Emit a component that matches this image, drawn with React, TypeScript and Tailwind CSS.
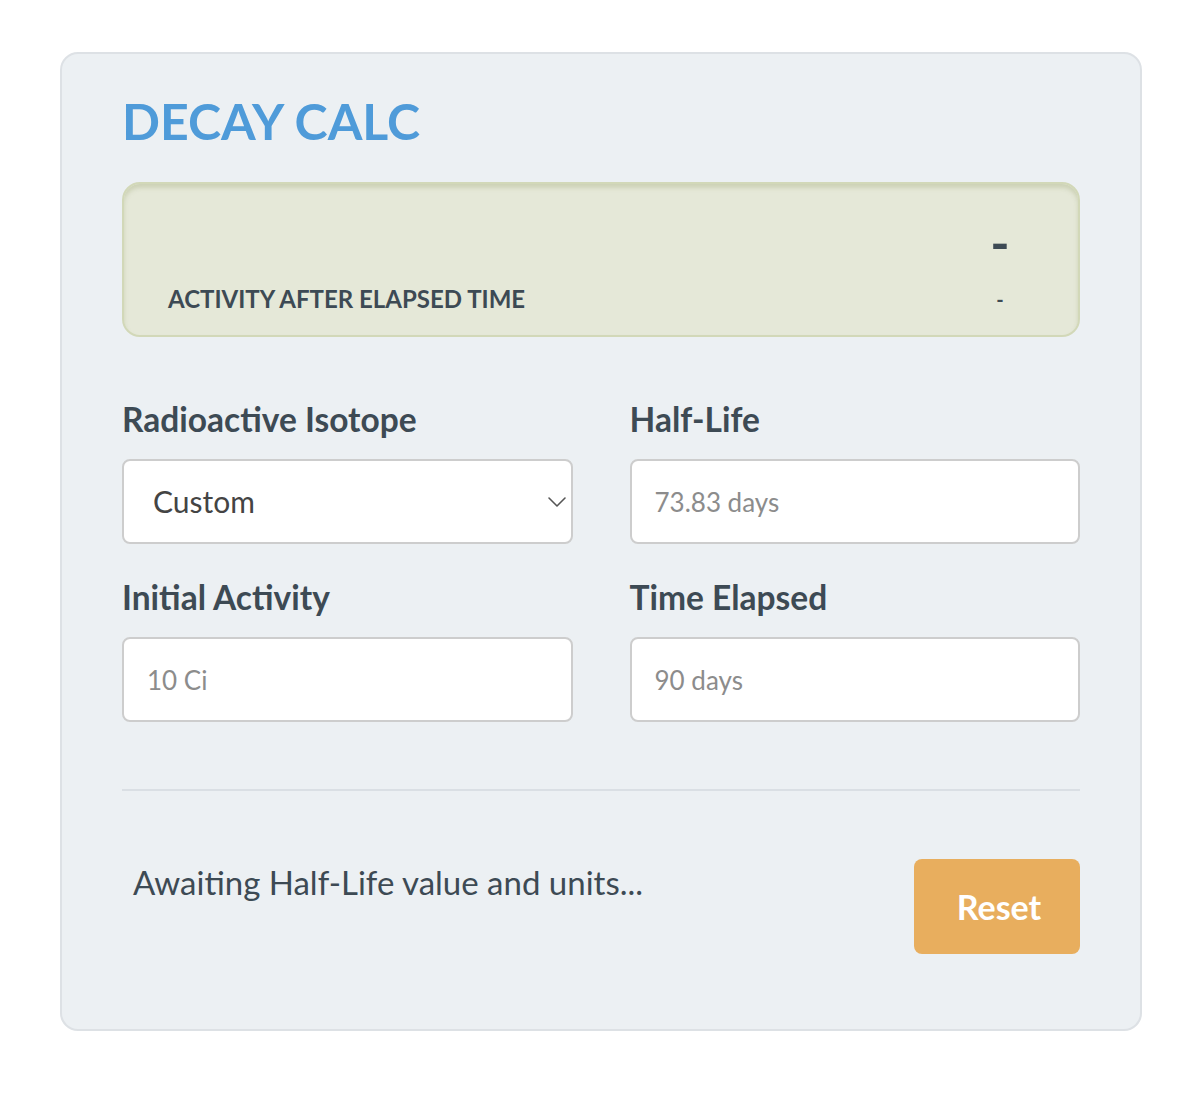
import { ChevronDown } from "lucide-react";

const font = { fontFamily: "Lato, 'Noto Sans', sans-serif" };

interface FieldProps {
  label: string;
  placeholder: string;
}

function Field({ label, placeholder }: FieldProps) {
  return (
    <div className="flex flex-col">
      <label className="text-[33.5px] font-bold leading-[38px] text-[#3d4a54]">
        {label}
      </label>
      <input
        placeholder={placeholder}
        className="mt-[21px] h-[85px] w-full rounded-[8px] border-2 border-[#cdcdcd] bg-white px-[23px] text-[26px] text-[#444] placeholder:text-[#8c8c8c] outline-none"
      />
    </div>
  );
}

export default function App() {
  return (
    <div className="min-h-screen bg-white pt-[52px] pl-[60px]" style={font}>
      <div className="w-[1082px] rounded-[18px] border-2 border-[#dde1e5] bg-[#ecf0f3] px-[60px] pt-[36px] pb-[75px]">
        <h1 className="text-[50px] font-bold leading-[62px] text-[#4f9bd9]">
          DECAY CALC
        </h1>

        {/* result box */}
        <div className="mt-[30px] h-[155px] rounded-[18px] border-2 border-[#d2d8b8] bg-[#e5e8d8] shadow-[inset_0_4px_4px_rgba(160,170,120,0.35)] pl-[44px] pr-[38px]">
          <div className="flex justify-end pt-[27px]">
            <span className="w-[80px] text-center text-[52px] font-bold leading-[62px] text-[#3d4a54]">
              -
            </span>
          </div>
          <div className="mt-[11px] flex items-center justify-between">
            <span className="text-[24px] font-bold leading-[28px] text-[#3d4a54]">
              ACTIVITY AFTER ELAPSED TIME
            </span>
            <span className="w-[80px] text-center text-[20px] font-bold text-[#3d4a54]">
              -
            </span>
          </div>
        </div>

        {/* fields */}
        <div className="mt-[63px] grid grid-cols-2 gap-x-[57px] gap-y-[34px]">
          <div className="flex flex-col">
            <label className="text-[33.5px] font-bold leading-[38px] text-[#3d4a54]">
              Radioactive Isotope
            </label>
            <div className="relative mt-[21px]">
              <select className="h-[85px] w-full appearance-none rounded-[8px] border-2 border-[#cdcdcd] bg-white pl-[29px] text-[30px] text-[#444] outline-none">
                <option>Custom</option>
              </select>
              <ChevronDown
                className="pointer-events-none absolute right-0 top-1/2 -translate-y-1/2 text-[#555]"
                size={32}
                strokeWidth={1.2}
              />
            </div>
          </div>
          <Field label="Half-Life" placeholder="73.83 days" />
          <Field label="Initial Activity" placeholder="10 Ci" />
          <Field label="Time Elapsed" placeholder="90 days" />
        </div>

        <div className="mt-[67px] h-[2px] bg-[#dadfe4]" />

        <div className="mt-[68px] flex items-start justify-between">
          <p className="mt-[4px] pl-[11px] text-[33px] leading-[38px] text-[#3d4a54]">
            Awaiting Half-Life value and units...
          </p>
          <button className="h-[95px] w-[166px] rounded-[8px] bg-[#e8ae5e] pl-[4px] text-[34px] font-bold text-white">
            Reset
          </button>
        </div>
      </div>
    </div>
  );
}
